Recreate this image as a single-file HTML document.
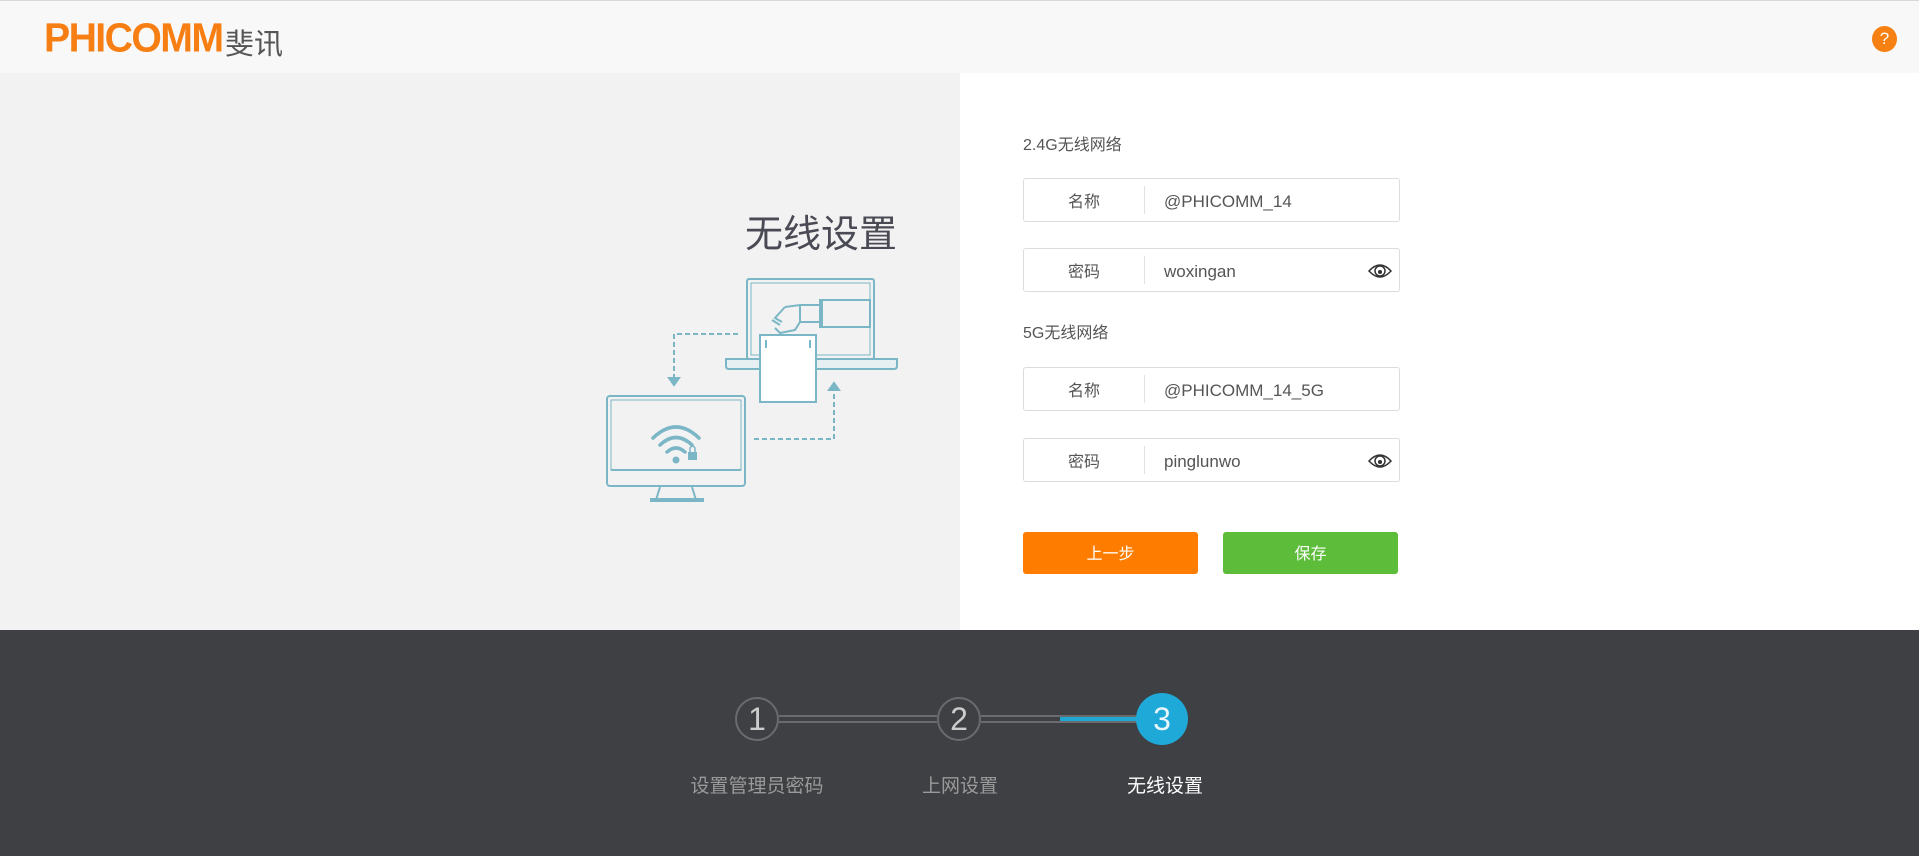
<!DOCTYPE html>
<html><head><meta charset="utf-8"><style>
*{margin:0;padding:0;box-sizing:border-box}
body{width:1919px;height:856px;overflow:hidden;font-family:"Liberation Sans","Noto Sans CJK SC",sans-serif;position:relative;background:#fff}
.abs{position:absolute}
.header{left:0;top:0;width:1919px;height:73px;background:#f8f8f8;border-top:1px solid #d8d8d8}
.left{left:0;top:73px;width:960px;height:557px;background:#f2f2f2}
.footer{left:0;top:630px;width:1919px;height:226px;background:#3f4044}
.lbl{font-size:16px;color:#555}
.box{left:1023px;width:377px;height:44px;border:1px solid #dcdcdc;border-radius:3px;background:#fff}
.box .k{position:absolute;left:0;top:3px;width:120px;height:42px;line-height:42px;text-align:center;font-size:16px;color:#555}
.box .d{position:absolute;left:120px;top:7px;width:1px;height:28px;background:#e2e2e2}
.box .v{position:absolute;left:140px;top:2px;line-height:42px;font-size:17px;color:#555}
.box svg{position:absolute;right:6px;top:11px}
.btn{top:532px;height:42px;line-height:46px;text-align:center;color:#fff;font-size:16px;border-radius:3px}
.circ{width:44px;height:44px;border:2px solid #6a6b6f;border-radius:50%;color:#ccc;font-size:32px;line-height:40px;text-align:center;font-weight:300;background:#3f4044}
.step{font-size:19px;color:#9a9a9a;top:771px;width:200px;text-align:center}
</style></head><body>
<div class="abs header">
 <div class="abs" style="left:44px;top:14px;font-size:37px;font-weight:bold;color:#f67e12;letter-spacing:-1.5px;transform:scaleX(1.06) scaleY(1.1);transform-origin:left top">PHICOMM</div>
 <div class="abs" style="left:225px;top:20px;font-size:29px;color:#555">斐讯</div>
 <div class="abs" style="left:1872px;top:25px;width:25px;height:26px;border-radius:50%;background:#f68012;color:#fff;font-size:17px;text-align:center;line-height:26px">?</div>
</div>
<div class="abs left"></div>
<div class="abs" style="left:740px;top:203px;width:157px;text-align:right;font-size:38px;color:#4a4a55;white-space:nowrap">无线设置</div>
<svg class="abs" style="left:600px;top:270px" width="310" height="240" viewBox="600 270 310 240" fill="none" stroke="#7ab6c6" stroke-width="2">
 <rect x="747" y="279" width="127" height="80" rx="2"/>
 <rect x="751" y="283" width="119" height="72" stroke-width="1"/>
 <path d="M726 359 H897 V366 Q897 369 894 369 H729 Q726 369 726 366 Z" fill="#e6f0f3"/>
 <rect x="820" y="300" width="50" height="27" fill="#f2f2f2"/>
 <path d="M822 300 V327 M800 305 H822 M800 322 H822 M785 307 L800 305 L800 322 L795 330 L780 333 L775 328 M785 307 L775 318 L782 322 M780 325 L772 320" stroke-width="2"/>
 <rect x="760" y="335" width="56" height="67" fill="#fff"/>
 <path d="M766 340 V348 M810 340 V348"/>
 <path d="M738 334 H674 V378" stroke-dasharray="5 3"/>
 <path d="M669 378 L674 385 L679 378 Z" fill="#7ab6c6"/>
 <path d="M754 439 H834 V390" stroke-dasharray="5 3"/>
 <path d="M829 390 L834 383 L839 390 Z" fill="#7ab6c6"/>
 <rect x="607" y="396" width="138" height="90" rx="3" fill="#f2f2f2"/>
 <path d="M611 400 H741 V470 H611 Z" stroke-width="1"/>
 <path d="M611 470 H741" />
 <path d="M660 487 L656 500 M692 487 L696 500"/>
 <path d="M650 500 H704" stroke-width="4"/>
 <path d="M653 438 Q676 416 699 438 M660 445 Q676 430 692 445 M667 452 Q676 444 685 452" stroke-width="3.5" stroke-linecap="round"/>
 <circle cx="676" cy="460" r="3.5" fill="#7ab6c6" stroke="none"/>
 <rect x="688" y="452" width="9" height="8" fill="#7ab6c6" stroke="none"/>
 <path d="M690 452 V448 Q692.5 444 695 448 V452" stroke-width="1.5"/>
</svg>
<div class="abs lbl" style="left:1023px;top:131px">2.4G无线网络</div>
<div class="abs box" style="top:178px"><div class="k">名称</div><div class="d"></div><div class="v">@PHICOMM_14</div></div>
<div class="abs box" style="top:248px"><div class="k">密码</div><div class="d"></div><div class="v">woxingan</div>
 <svg width="26" height="22" viewBox="0 0 26 22" fill="none" stroke="#333" stroke-width="1.5"><path d="M2 11 Q13 -1 24 11 Q13 23 2 11 Z"/><circle cx="13" cy="11" r="5"/><circle cx="13" cy="12" r="1.3" fill="#333"/></svg></div>
<div class="abs lbl" style="left:1023px;top:319px">5G无线网络</div>
<div class="abs box" style="top:367px"><div class="k">名称</div><div class="d"></div><div class="v">@PHICOMM_14_5G</div></div>
<div class="abs box" style="top:438px"><div class="k">密码</div><div class="d"></div><div class="v">pinglunwo</div>
 <svg width="26" height="22" viewBox="0 0 26 22" fill="none" stroke="#333" stroke-width="1.5"><path d="M2 11 Q13 -1 24 11 Q13 23 2 11 Z"/><circle cx="13" cy="11" r="5"/><circle cx="13" cy="12" r="1.3" fill="#333"/></svg></div>
<div class="abs btn" style="left:1023px;width:175px;background:#fe7d00">上一步</div>
<div class="abs btn" style="left:1223px;width:175px;background:#5dbc39">保存</div>
<div class="abs footer"></div>
<div class="abs" style="left:779px;top:715px;width:158px;height:8px;border-top:2px solid #6a6b6f;border-bottom:2px solid #6a6b6f"></div>
<div class="abs" style="left:981px;top:715px;width:160px;height:8px;border-top:2px solid #6a6b6f;border-bottom:2px solid #6a6b6f"></div>
<div class="abs" style="left:1060px;top:717px;width:90px;height:4px;background:#20a8d4"></div>
<div class="abs circ" style="left:735px;top:697px">1</div>
<div class="abs circ" style="left:937px;top:697px">2</div>
<div class="abs circ" style="left:1136px;top:693px;width:52px;height:52px;border:none;background:#1ea9d8;color:#e8f6fb;line-height:52px">3</div>
<div class="abs step" style="left:657px">设置管理员密码</div>
<div class="abs step" style="left:860px">上网设置</div>
<div class="abs step" style="left:1065px;color:#fff">无线设置</div>
</body></html>
